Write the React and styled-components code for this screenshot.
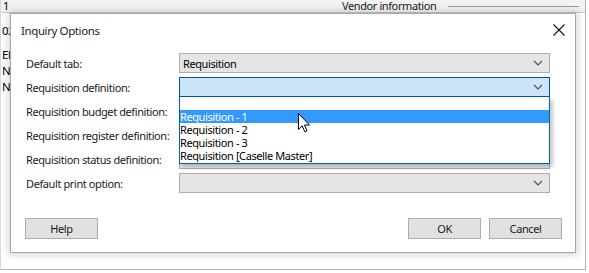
import React from 'react'
import styled, { createGlobalStyle } from 'styled-components'

const GlobalStyle = createGlobalStyle`
	html, body {
		margin: 0;
		padding: 0;
		background: #ffffff;
	}
	body {
		font-family: 'Noto Sans', 'Open Sans', sans-serif;
		font-size: 11px;
		letter-spacing: -0.4px;
		color: #000;
	}
`

const Screen = styled.div`
	position: relative;
	width: 589px;
	height: 273px;
	overflow: hidden;
	background: #ffffff;
`

const ParentWindow = styled.div`
	width: 586px;
	height: 270px;
	border-right: 1px solid #b4b4b4;
	border-bottom: 1px solid #b4b4b4;
	border-left: 1px solid #d8d8d8;
	box-sizing: border-box;
	display: flex;
	flex-direction: column;
`

const TopStrip = styled.div`
	height: 12px;
	flex: none;
	display: flex;
	align-items: center;
	background: #f2f2f2;
	border-bottom: 1px solid #c8c8c8;
	padding-left: 2px;
	font-size: 11px;
	line-height: 12px;
`

const StripNumber = styled.span`
	width: 339px;
`

const VendorInfo = styled.span`
	color: #1a1a1a;
	margin-right: 12px;
`

const StripLine = styled.span`
	flex: 1;
	height: 1px;
	background: #9a9a9a;
	margin-right: 6px;
`

const SideColumn = styled.div`
	display: flex;
	flex-direction: column;
	padding: 10px 0 0 1px;
	line-height: 16px;
	font-size: 11.5px;
`

const SideText = styled.div`
	margin-bottom: ${p => p.$gap || 0}px;
`

const Dialog = styled.div`
	position: absolute;
	left: 10px;
	top: 13px;
	width: 566px;
	height: 240px;
	box-sizing: border-box;
	background: #ffffff;
	border: 1px solid #a8a8a8;
	box-shadow: 0 0 7px 2px rgba(0, 0, 0, 0.16);
	display: flex;
	flex-direction: column;
`

const TitleBar = styled.div`
	height: 32px;
	display: flex;
	align-items: center;
	justify-content: space-between;
	padding: 0 9px 0 10px;
	font-size: 11.5px;
`

const Title = styled.span`
	color: #1b1b1b;
	padding-top: 1px;
`

const CloseButton = styled.div`
	width: 14px;
	height: 14px;
	display: flex;
	align-items: center;
	justify-content: center;
`

const Form = styled.div`
	display: flex;
	flex-direction: column;
	gap: 4px;
	padding: 7px 25px 0 15px;
`

const Row = styled.div`
	display: flex;
	align-items: center;
	height: 20px;
`

const Label = styled.div`
	width: 153px;
	color: #1a1a1a;
	white-space: nowrap;
`

const ComboWrap = styled.div`
	position: relative;
	flex: 1;
	height: 20px;
`

const Combo = styled.div`
	height: 20px;
	box-sizing: border-box;
	display: flex;
	align-items: center;
	justify-content: space-between;
	padding: 0 6px 0 3px;
	background: ${p => (p.$active ? '#cce4f7' : '#e5e5e5')};
	border: 1px solid ${p => (p.$active ? '#005499' : '#adadad')};
`

const DropList = styled.div`
	position: absolute;
	left: 0;
	top: 20px;
	width: 100%;
	box-sizing: border-box;
	background: #ffffff;
	border: 1px solid #0063b1;
	border-top: none;
	box-shadow: 3px 3px 4px rgba(0, 0, 0, 0.22);
	z-index: 5;
	padding-bottom: 1px;
`

const Option = styled.div`
	height: 13px;
	line-height: 13px;
	overflow: hidden;
	white-space: nowrap;
	background: ${p => (p.$selected ? '#3399ff' : 'transparent')};
	color: ${p => (p.$selected ? '#ffffff' : '#000000')};
`

const Footer = styled.div`
	display: flex;
	align-items: center;
	justify-content: space-between;
	padding: 25px 13px 0 14px;
`

const ButtonGroup = styled.div`
	display: flex;
	gap: 8px;
`

const Button = styled.div`
	width: 73px;
	height: 21px;
	box-sizing: border-box;
	display: flex;
	align-items: center;
	justify-content: center;
	background: #e1e1e1;
	border: 1px solid #adadad;
	color: #1a1a1a;
`

const Cursor = styled.svg`
	position: absolute;
	left: 298px;
	top: 113px;
	z-index: 10;
`

const Chevron = () => (
	<svg width="10" height="6" viewBox="0 0 10 6">
		<path d="M1 1 L5 5 L9 1" fill="none" stroke="#505050" strokeWidth="1.1" />
	</svg>
)

const fields = [
	{ label: 'Default tab:', value: 'Requisition' },
	{ label: 'Requisition definition:', value: '', active: true, open: true },
	{ label: 'Requisition budget definition:', value: '' },
	{ label: 'Requisition register definition:', value: '' },
	{ label: 'Requisition status definition:', value: '' },
	{ label: 'Default print option:', value: '' },
]

const options = ['', 'Requisition - 1', 'Requisition - 2', 'Requisition - 3', 'Requisition [Caselle Master]']

export default function App() {
	return (
		<>
			<GlobalStyle />
			<Screen>
				<ParentWindow>
					<TopStrip>
						<StripNumber>1</StripNumber>
						<VendorInfo>Vendor information</VendorInfo>
						<StripLine />
					</TopStrip>
					<SideColumn>
						<SideText $gap={8}>02</SideText>
						<SideText>El</SideText>
						<SideText>Ne</SideText>
						<SideText>Ne</SideText>
					</SideColumn>
				</ParentWindow>

				<Dialog>
					<TitleBar>
						<Title>Inquiry Options</Title>
						<CloseButton>
							<svg width="12" height="12" viewBox="0 0 12 12">
								<path d="M0.5 0.5 L11.5 11.5 M11.5 0.5 L0.5 11.5" stroke="#111" strokeWidth="1.1" />
							</svg>
						</CloseButton>
					</TitleBar>

					<Form>
						{fields.map(f => (
							<Row key={f.label}>
								<Label>{f.label}</Label>
								<ComboWrap>
									<Combo $active={f.active}>
										<span>{f.value}</span>
										<Chevron />
									</Combo>
									{f.open && (
										<DropList>
											{options.map((o, i) => (
												<Option key={i} $selected={i === 1}>
													{o}
												</Option>
											))}
										</DropList>
									)}
								</ComboWrap>
							</Row>
						))}
					</Form>

					<Footer>
						<Button>Help</Button>
						<ButtonGroup>
							<Button>OK</Button>
							<Button>Cancel</Button>
						</ButtonGroup>
					</Footer>
				</Dialog>

				<Cursor width="13" height="21" viewBox="0 0 13 21">
					<path
						d="M0.5 0.5 L0.5 16.5 L4.2 12.8 L6.8 18.8 L9 17.8 L6.5 12 L11.5 12 Z"
						fill="#ffffff"
						stroke="#000000"
						strokeWidth="1"
						strokeLinejoin="miter"
					/>
				</Cursor>
			</Screen>
		</>
	)
}
